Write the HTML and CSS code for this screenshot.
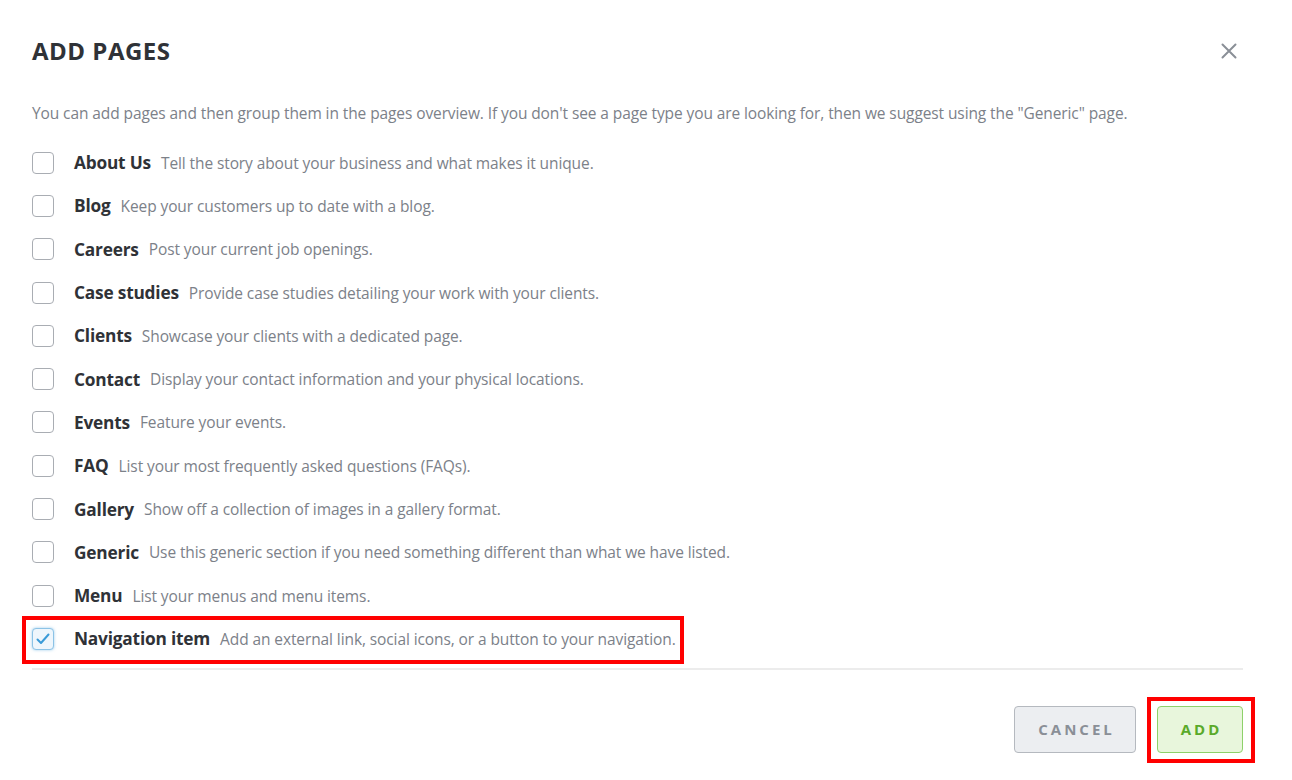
FILE: index.html
```html
<!DOCTYPE html>
<html>
<head>
<meta charset="utf-8">
<link rel="stylesheet" href="styles.css">
</head>
<body>
<div class="dialog">
  <div class="header">
    <h1 class="title">ADD PAGES</h1>
    <button class="close" aria-label="Close">
      <svg width="16" height="16" viewBox="0 0 16 16"><path d="M1.5 1.5 L14.5 14.5 M14.5 1.5 L1.5 14.5" stroke="#8a8f97" stroke-width="2" stroke-linecap="round"/></svg>
    </button>
  </div>
  <p class="intro">You can add pages and then group them in the pages overview. If you don't see a page type you are looking for, then we suggest using the "Generic" page.</p>
  <ul class="list">
    <li class="row"><span class="box"></span><span class="name">About Us</span><span class="desc">Tell the story about your business and what makes it unique.</span></li>
    <li class="row"><span class="box"></span><span class="name">Blog</span><span class="desc">Keep your customers up to date with a blog.</span></li>
    <li class="row"><span class="box"></span><span class="name">Careers</span><span class="desc">Post your current job openings.</span></li>
    <li class="row"><span class="box"></span><span class="name">Case studies</span><span class="desc">Provide case studies detailing your work with your clients.</span></li>
    <li class="row"><span class="box"></span><span class="name">Clients</span><span class="desc">Showcase your clients with a dedicated page.</span></li>
    <li class="row"><span class="box"></span><span class="name">Contact</span><span class="desc">Display your contact information and your physical locations.</span></li>
    <li class="row"><span class="box"></span><span class="name">Events</span><span class="desc">Feature your events.</span></li>
    <li class="row"><span class="box"></span><span class="name">FAQ</span><span class="desc">List your most frequently asked questions (FAQs).</span></li>
    <li class="row"><span class="box"></span><span class="name">Gallery</span><span class="desc">Show off a collection of images in a gallery format.</span></li>
    <li class="row"><span class="box"></span><span class="name">Generic</span><span class="desc">Use this generic section if you need something different than what we have listed.</span></li>
    <li class="row"><span class="box"></span><span class="name">Menu</span><span class="desc">List your menus and menu items.</span></li>
    <li class="row highlighted"><span class="box checked"><svg width="14" height="12" viewBox="0 0 14 12"><path d="M1.5 6.5 L5 10 L12.5 1.5" fill="none" stroke="#3a9bd8" stroke-width="2" stroke-linecap="round" stroke-linejoin="round"/></svg></span><span class="name">Navigation item</span><span class="desc">Add an external link, social icons, or a button to your navigation.</span></li>
  </ul>
  <div class="footer">
    <button class="btn cancel">CANCEL</button>
    <button class="btn add">ADD</button>
  </div>
</div>
</body>
</html>
```
FILE: styles.css
```css
*, *::before, *::after { box-sizing: border-box; }
body {
  margin: 0;
  background: #fff;
  font-family: "Open Sans", "Lato", sans-serif;
  color: #333;
}
.dialog {
  width: 1292px;
  height: 780px;
  padding: 33px 49px 0 32px;
}
.header {
  display: flex;
  justify-content: space-between;
  align-items: center;
  height: 34px;
}
.title {
  margin: 0;
  font-size: 24px;
  font-weight: 700;
  color: #2f3237;
  letter-spacing: 0.5px;
}
.close {
  border: 0;
  background: none;
  padding: 0;
  margin-right: 6px;
  display: flex;
  margin-top: 2px;
}
.intro {
  margin: 34px 0 16px;
  font-size: 15.5px;
  color: #7c8189;
  line-height: 24px;
  letter-spacing: -0.1px;
}
.list {
  list-style: none;
  margin: 0;
  padding: 0;
  border-bottom: 2px solid #ececec;
  padding-bottom: 7px;
}
.row {
  display: flex;
  align-items: center;
  height: 43.3px;
  position: relative;
}
.box {
  width: 22px;
  height: 22px;
  border: 1.5px solid #a9adb3;
  border-radius: 4px;
  margin-right: 20px;
  flex: none;
  display: flex;
  align-items: center;
  justify-content: center;
}
.box.checked {
  border-color: #8cc3e6;
  background: #eef6fc;
  box-shadow: 0 0 3px rgba(58,155,216,0.5);
}
.name {
  font-size: 17.3px;
  font-weight: 700;
  color: #2f3237;
  margin-right: 10px;
  letter-spacing: -0.2px;
}
.desc {
  font-size: 15.5px;
  color: #7c8189;
  letter-spacing: -0.1px;
}
.highlighted::after {
  content: "";
  position: absolute;
  left: -10px;
  top: -1px;
  width: 662px;
  height: 48px;
  border: 4px solid #f00;
}
.footer {
  display: flex;
  justify-content: flex-end;
  gap: 21px;
  margin-top: 36px;
}
.btn {
  height: 47px;
  border-radius: 4px;
  font-family: "Open Sans", sans-serif;
  font-weight: 700;
  font-size: 15px;
  letter-spacing: 3px;
  padding: 0 0 0 3px;
}
.cancel {
  width: 122px;
  background: #eceef1;
  border: 1.5px solid #b5b9bf;
  color: #8a8f97;
}
.add {
  width: 86px;
  background: #e8f6dc;
  border: 1.5px solid #8ed16a;
  color: #5aaa2a;
  position: relative;
}
.add::after {
  content: "";
  position: absolute;
  left: -11px;
  top: -10px;
  width: 108px;
  height: 66px;
  border: 4px solid #f00;
}
```
